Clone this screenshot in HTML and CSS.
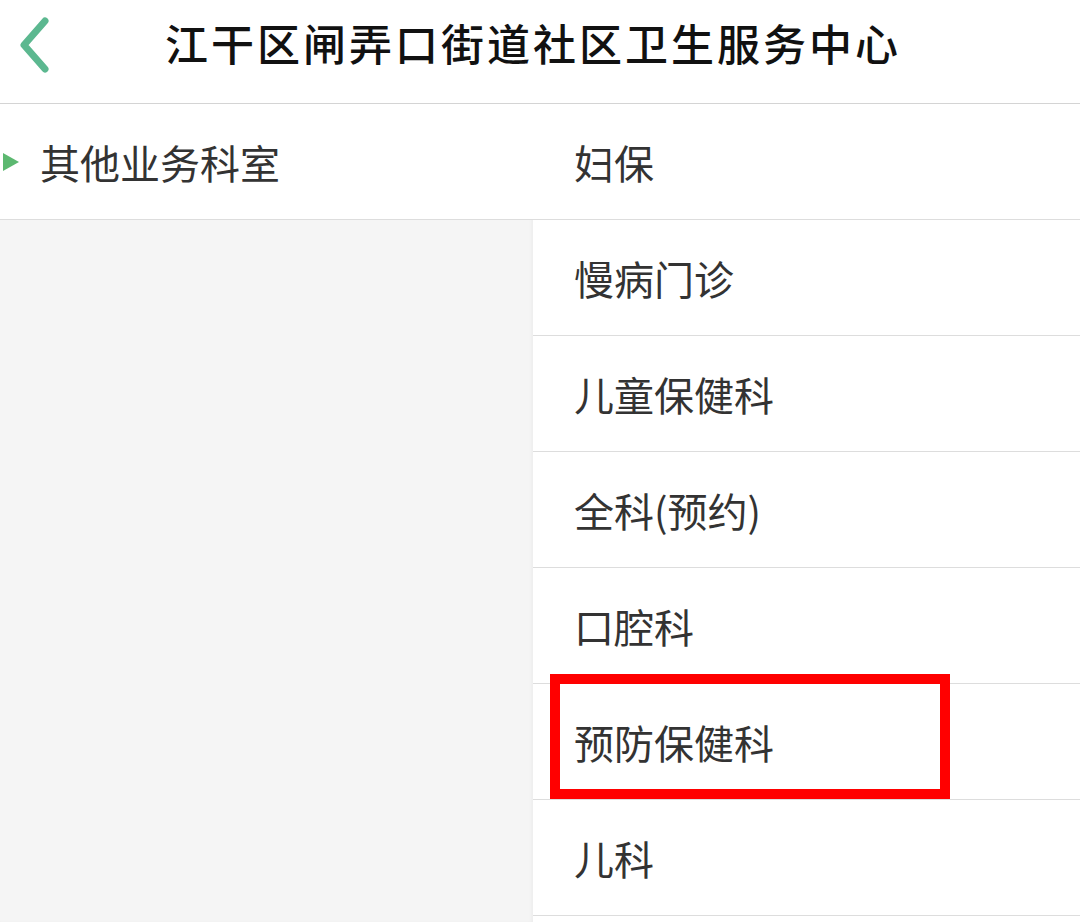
FILE: index.html
```html
<!DOCTYPE html>
<html lang="zh-CN">
<head>
    <meta charset="UTF-8">
    <meta name="viewport" content="width=device-width, initial-scale=1.0">
    <title>科室选择</title>
    <link rel="stylesheet" href="styles.css">
</head>
<body>
    <div class="header">
        <span class="back">
            <svg width="40" height="60" viewBox="0 0 40 60">
                <polyline points="30,6 9,30 30,54" fill="none" stroke="#5cb890" stroke-width="7" stroke-linecap="round" stroke-linejoin="round"/>
            </svg>
        </span>
        <h1 class="title">江干区闸弄口街道社区卫生服务中心</h1>
    </div>
    <div class="main">
        <div class="side">
            <div class="side-item active"><span class="arrow"></span>其他业务科室</div>
        </div>
        <ul class="list">
            <li>妇保</li>
            <li>慢病门诊</li>
            <li>儿童保健科</li>
            <li>全科(预约)</li>
            <li>口腔科</li>
            <li class="marked">预防保健科<span class="mark"></span></li>
            <li>儿科</li>
        </ul>
    </div>
</body>
</html>
```
FILE: styles.css
```css
body {
    margin: 0;
    font-family: "Noto Sans CJK SC", "Noto Sans", sans-serif;
    background: #fff;
    color: #333;
}
.header {
    height: 84px;
    padding-bottom: 19px;
    display: flex;
    align-items: center;
    position: relative;
    border-bottom: 1px solid #d4d4d4;
}
.back {
    position: absolute;
    left: 15px;
    top: 15px;
}
.title {
    margin: 0 auto;
    padding-right: 14px;
    font-size: 43px;
    font-weight: 500;
    color: #111;
    letter-spacing: 3px;
}
.main {
    display: flex;
    height: 818px;
}
.side {
    width: 533px;
    background: #f5f5f5;
    box-shadow: inset -2px 0 3px rgba(0, 0, 0, 0.03);
}
.side-item {
    height: 115px;
    display: flex;
    align-items: center;
    padding-left: 40px;
    font-size: 40px;
    color: #333;
    position: relative;
}
.side-item.active {
    background: #fff;
    border-bottom: 1px solid #ddd;
}
.arrow {
    position: absolute;
    left: 3px;
    top: 50%;
    margin-top: -9px;
    border-left: 16px solid #5cb870;
    border-top: 9px solid transparent;
    border-bottom: 9px solid transparent;
}
.list {
    flex: 1;
    margin: 0;
    padding: 0;
    list-style: none;
}
.list li {
    height: 115px;
    display: flex;
    align-items: center;
    padding-left: 41px;
    font-size: 40px;
    color: #333;
    border-bottom: 1px solid #ddd;
    position: relative;
}
/* red annotation box */
.mark {
    position: absolute;
    left: 17px;
    top: -10px;
    width: 380px;
    height: 105px;
    border: 10px solid #f00;
}
```
